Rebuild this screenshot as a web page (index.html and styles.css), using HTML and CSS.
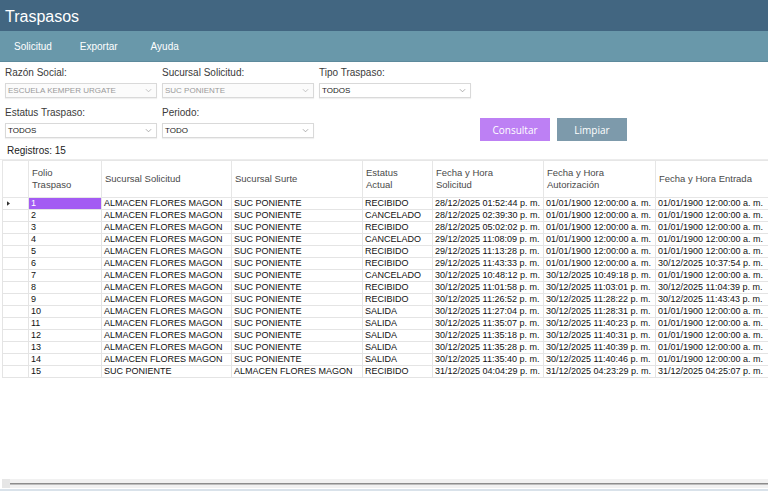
FILE: index.html
```html
<!DOCTYPE html>
<html lang="es">
<head>
<meta charset="utf-8">
<title>Traspasos</title>
<link rel="stylesheet" href="styles.css">
</head>
<body>
<div class="app">
  <header class="titlebar">Traspasos</header>
  <nav class="menubar">
    <span class="menu-item">Solicitud</span>
    <span class="menu-item">Exportar</span>
    <span class="menu-item ayuda">Ayuda</span>
  </nav>

  <section class="filters">
    <div class="field">
      <label class="lbl">Razón Social:</label>
      <div class="select disabled"><span>ESCUELA KEMPER URGATE</span><svg class="chev" viewBox="0 0 8 5" width="7" height="5"><path d="M1 1l3 3 3-3" fill="none" stroke="#b5b5b5" stroke-width="0.9"/></svg></div>
    </div>
    <div class="field">
      <label class="lbl">Sucursal Solicitud:</label>
      <div class="select disabled"><span>SUC PONIENTE</span><svg class="chev" viewBox="0 0 8 5" width="7" height="5"><path d="M1 1l3 3 3-3" fill="none" stroke="#b5b5b5" stroke-width="0.9"/></svg></div>
    </div>
    <div class="field">
      <label class="lbl">Tipo Traspaso:</label>
      <div class="select"><span>TODOS</span><svg class="chev" viewBox="0 0 8 5" width="7" height="5"><path d="M1 1l3 3 3-3" fill="none" stroke="#9a9a9a" stroke-width="0.9"/></svg></div>
    </div>
    <div></div>
    <div class="field">
      <label class="lbl">Estatus Traspaso:</label>
      <div class="select"><span>TODOS</span><svg class="chev" viewBox="0 0 8 5" width="7" height="5"><path d="M1 1l3 3 3-3" fill="none" stroke="#9a9a9a" stroke-width="0.9"/></svg></div>
    </div>
    <div class="field">
      <label class="lbl">Periodo:</label>
      <div class="select"><span>TODO</span><svg class="chev" viewBox="0 0 8 5" width="7" height="5"><path d="M1 1l3 3 3-3" fill="none" stroke="#9a9a9a" stroke-width="0.9"/></svg></div>
    </div>
    <div></div>
    <div class="buttons">
      <button class="btn btn-primary">Consultar</button>
      <button class="btn btn-secondary">Limpiar</button>
    </div>
  </section>

  <div class="count">Registros: 15</div>

  <section class="gridwrap">
    <table class="grid">
      <colgroup>
        <col class="c-rh"><col class="c-folio"><col class="c-suc"><col class="c-surte"><col class="c-est"><col class="c-f1"><col class="c-f2"><col class="c-f3">
      </colgroup>
      <thead>
        <tr>
          <th class="rh"></th>
          <th>Folio<br>Traspaso</th>
          <th>Sucursal Solicitud</th>
          <th>Sucursal Surte</th>
          <th>Estatus<br>Actual</th>
          <th>Fecha y Hora<br>Solicitud</th>
          <th>Fecha y Hora<br>Autorización</th>
          <th>Fecha y Hora Entrada</th>
        </tr>
      </thead>
      <tbody>
        <tr><td class="rh"><svg class="arrow" viewBox="0 0 4 6" width="3" height="5"><path d="M0 0l4 3-4 3z" fill="#333"/></svg></td><td class="sel">1</td><td>ALMACEN FLORES MAGON</td><td>SUC PONIENTE</td><td>RECIBIDO</td><td>28/12/2025 01:52:44 p. m.</td><td>01/01/1900 12:00:00 a. m.</td><td>01/01/1900 12:00:00 a. m.</td></tr>
        <tr><td class="rh"></td><td>2</td><td>ALMACEN FLORES MAGON</td><td>SUC PONIENTE</td><td>CANCELADO</td><td>28/12/2025 02:39:30 p. m.</td><td>01/01/1900 12:00:00 a. m.</td><td>01/01/1900 12:00:00 a. m.</td></tr>
        <tr><td class="rh"></td><td>3</td><td>ALMACEN FLORES MAGON</td><td>SUC PONIENTE</td><td>RECIBIDO</td><td>28/12/2025 05:02:02 p. m.</td><td>01/01/1900 12:00:00 a. m.</td><td>01/01/1900 12:00:00 a. m.</td></tr>
        <tr><td class="rh"></td><td>4</td><td>ALMACEN FLORES MAGON</td><td>SUC PONIENTE</td><td>CANCELADO</td><td>29/12/2025 11:08:09 p. m.</td><td>01/01/1900 12:00:00 a. m.</td><td>01/01/1900 12:00:00 a. m.</td></tr>
        <tr><td class="rh"></td><td>5</td><td>ALMACEN FLORES MAGON</td><td>SUC PONIENTE</td><td>RECIBIDO</td><td>29/12/2025 11:13:28 p. m.</td><td>01/01/1900 12:00:00 a. m.</td><td>01/01/1900 12:00:00 a. m.</td></tr>
        <tr><td class="rh"></td><td>6</td><td>ALMACEN FLORES MAGON</td><td>SUC PONIENTE</td><td>RECIBIDO</td><td>29/12/2025 11:43:33 p. m.</td><td>01/01/1900 12:00:00 a. m.</td><td>30/12/2025 10:37:54 p. m.</td></tr>
        <tr><td class="rh"></td><td>7</td><td>ALMACEN FLORES MAGON</td><td>SUC PONIENTE</td><td>CANCELADO</td><td>30/12/2025 10:48:12 p. m.</td><td>30/12/2025 10:49:18 p. m.</td><td>01/01/1900 12:00:00 a. m.</td></tr>
        <tr><td class="rh"></td><td>8</td><td>ALMACEN FLORES MAGON</td><td>SUC PONIENTE</td><td>RECIBIDO</td><td>30/12/2025 11:01:58 p. m.</td><td>30/12/2025 11:03:01 p. m.</td><td>30/12/2025 11:04:39 p. m.</td></tr>
        <tr><td class="rh"></td><td>9</td><td>ALMACEN FLORES MAGON</td><td>SUC PONIENTE</td><td>RECIBIDO</td><td>30/12/2025 11:26:52 p. m.</td><td>30/12/2025 11:28:22 p. m.</td><td>30/12/2025 11:43:43 p. m.</td></tr>
        <tr><td class="rh"></td><td>10</td><td>ALMACEN FLORES MAGON</td><td>SUC PONIENTE</td><td>SALIDA</td><td>30/12/2025 11:27:04 p. m.</td><td>30/12/2025 11:28:31 p. m.</td><td>01/01/1900 12:00:00 a. m.</td></tr>
        <tr><td class="rh"></td><td>11</td><td>ALMACEN FLORES MAGON</td><td>SUC PONIENTE</td><td>SALIDA</td><td>30/12/2025 11:35:07 p. m.</td><td>30/12/2025 11:40:23 p. m.</td><td>01/01/1900 12:00:00 a. m.</td></tr>
        <tr><td class="rh"></td><td>12</td><td>ALMACEN FLORES MAGON</td><td>SUC PONIENTE</td><td>SALIDA</td><td>30/12/2025 11:35:18 p. m.</td><td>30/12/2025 11:40:31 p. m.</td><td>01/01/1900 12:00:00 a. m.</td></tr>
        <tr><td class="rh"></td><td>13</td><td>ALMACEN FLORES MAGON</td><td>SUC PONIENTE</td><td>SALIDA</td><td>30/12/2025 11:35:28 p. m.</td><td>30/12/2025 11:40:39 p. m.</td><td>01/01/1900 12:00:00 a. m.</td></tr>
        <tr><td class="rh"></td><td>14</td><td>ALMACEN FLORES MAGON</td><td>SUC PONIENTE</td><td>SALIDA</td><td>30/12/2025 11:35:40 p. m.</td><td>30/12/2025 11:40:46 p. m.</td><td>01/01/1900 12:00:00 a. m.</td></tr>
        <tr><td class="rh"></td><td>15</td><td>SUC PONIENTE</td><td>ALMACEN FLORES MAGON</td><td>RECIBIDO</td><td>31/12/2025 04:04:29 p. m.</td><td>31/12/2025 04:23:29 p. m.</td><td>31/12/2025 04:25:07 p. m.</td></tr>
      </tbody>
    </table>
    <div class="hscroll">
      <span class="hs-box"></span>
      <span class="hs-track"></span>
    </div>
  </section>
  <div class="bottomline"></div>
</div>
</body>
</html>
```

FILE: styles.css
```css
* { box-sizing: border-box; }
html, body { margin: 0; padding: 0; }
body {
  font-family: "Liberation Sans", Arial, sans-serif;
  background: #ffffff;
  color: #222;
}
.app {
  height: 491px;
  display: flex;
  flex-direction: column;
  overflow: hidden;
}
.titlebar {
  height: 31px;
  background: #426681;
  color: #ffffff;
  font-size: 16px;
  line-height: 34px;
  padding-left: 5px;
}
.menubar {
  height: 31px;
  background: #6998aa;
  border-bottom: 1px solid #5d8a9c;
  display: flex;
  align-items: center;
  gap: 28px;
  padding-left: 14px;
  color: #ffffff;
  font-size: 10px;
}
.menu-item.ayuda { margin-left: 5px; }

.filters {
  display: grid;
  grid-template-columns: 152px 152px 152px auto;
  column-gap: 5px;
  row-gap: 8px;
  padding: 4px 0 0 5px;
}
.field { display: flex; flex-direction: column; }
.lbl {
  font-size: 10px;
  line-height: 14px;
  height: 14px;
  color: #3a3a3a;
  margin-bottom: 3px;
}
.select {
  height: 15px;
  border: 1px solid #d9d9d9;
  box-shadow: 0 1px 1px rgba(0,0,0,0.06);
  background: #ffffff;
  font-size: 8px;
  line-height: 13px;
  color: #222;
  padding: 0 4px 0 2px;
  display: flex;
  align-items: center;
  justify-content: space-between;
}
.select.disabled { color: #9a9a9a; background: #fbfbfb; }
.chev { flex: none; }
.buttons {
  display: flex;
  gap: 7px;
  align-self: end;
  margin: 0 0 -3px 4px;
}
.btn {
  width: 70px;
  height: 23px;
  border: none;
  padding: 0;
  color: #ffffff;
  font-family: "Open Sans", "Liberation Sans", sans-serif;
  font-size: 10px;
}
.btn-primary { background: #bd80f4; }
.btn-secondary { background: #7d9aab; }

.count {
  font-size: 10px;
  line-height: 14px;
  color: #222;
  padding-left: 7px;
  margin-top: 6px;
}

.gridwrap {
  flex: 1;
  display: flex;
  flex-direction: column;
  margin-top: 1px;
  padding-left: 2px;
  border-top: 1px solid #ececec;
}
.grid {
  table-layout: fixed;
  border-collapse: collapse;
  width: 766px;
  font-size: 9px;
}
.c-rh { width: 26px; }
.c-folio { width: 73px; }
.c-suc { width: 130px; }
.c-surte { width: 131px; }
.c-est { width: 70px; }
.c-f1 { width: 111px; }
.c-f2 { width: 112px; }
.c-f3 { width: 113px; }
.grid th {
  height: 37px;
  font-weight: normal;
  text-align: left;
  color: #4a4a4a;
  font-size: 9.5px;
  line-height: 12px;
  padding: 0 3px 0 3px;
  border: 1px solid #e6e6e6;
  vertical-align: middle;
}
.grid td {
  height: 12px;
  line-height: 11px;
  padding: 0 2px;
  white-space: nowrap;
  overflow: hidden;
  border: 1px solid #e4e4e4;
  color: #111;
}
.grid td.rh, .grid th.rh { padding: 0 0 0 4px; }
.grid td.sel { background: #a35bf3; color: #ffffff; }
.arrow { display: block; }

.hscroll {
  margin-top: auto;
  height: 9px;
  background: #f1f1f1;
  display: flex;
  align-items: center;
  margin-bottom: 1px;
}
.hs-box {
  width: 8px;
  height: 9px;
  background: #e6e6e6;
}
.hs-track {
  flex: 1;
  height: 2px;
  background: #8c8c8c;
  border-bottom: 1px solid #bdbdbd;
}
.bottomline {
  height: 2px;
  background: #d9e2ea;
}
```
